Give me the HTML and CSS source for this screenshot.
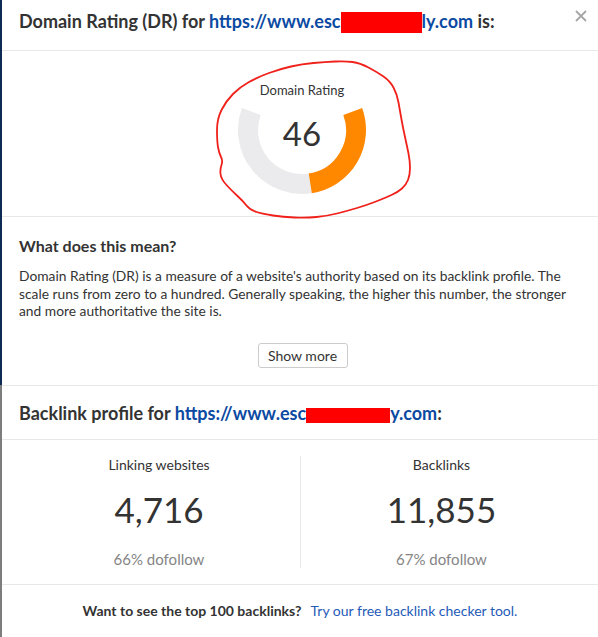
FILE: index.html
```html
<!DOCTYPE html>
<html lang="en">
<head>
    <meta charset="UTF-8">
    <meta name="viewport" content="width=device-width, initial-scale=1.0">
    <title>Domain Rating</title>
    <link rel="stylesheet" href="styles.css">
</head>
<body>
    <div class="modal">
        <div class="modal-header">
            <h2 class="title">Domain Rating (DR) for <a href="#" class="site">https://www.esc<span class="redact redact-lg"></span>ly.com</a> is:</h2>
            <button class="close" aria-label="Close">
                <svg width="12" height="12" viewBox="0 0 12 12"><path d="M1 1L11 11M11 1L1 11" stroke="#a6a6a6" stroke-width="1.8"/></svg>
            </button>
        </div>

        <div class="gauge-section">
            <div class="gauge">
                <svg width="128" height="128" viewBox="0 0 128 128">
                    <path d="M13.26 45.53 A54 54 0 0 0 72.26 117.36" fill="none" stroke="#ebebed" stroke-width="20"/>
                    <path d="M72.26 117.36 A54 54 0 0 0 114.74 45.53" fill="none" stroke="#ff8800" stroke-width="20"/>
                </svg>
                <div class="gauge-label">Domain Rating</div>
                <div class="gauge-value">46</div>
            </div>
            <svg class="scribble" width="596" height="170" viewBox="2 50 596 170">
                <path d="M218,146 Q217,140 217,129 Q217,118 221.5,109 Q226,100 233,93 Q240,86 249,81 Q258,76 269,72 Q280,68 291,65.5 Q302,63 313.5,62 Q325,61 335,60.5 Q345,60 352.5,61 Q360,62 368.5,66.5 Q377,71 383.5,75.5 Q390,80 393.5,86.5 Q397,93 398.5,101.5 Q400,110 401.5,118.5 Q403,127 405,136 Q407,145 408.5,152.5 Q410,160 410,167 Q410,174 408,179 Q406,184 402,187.5 Q398,191 391.5,194 Q385,197 376,200.5 Q367,204 357,207 Q347,210 337,212.5 Q327,215 316.5,216 Q306,217 294.5,216.5 Q283,216 273,214.5 Q263,213 256.5,211 Q250,209 246.5,204.5 Q243,200 237.5,195 Q232,190 226.5,184 Q221,178 220.5,173 Q220,168 221.5,164 Q223,160 221,156 Q219,152 218,146 Z" fill="none" stroke="#f0201a" stroke-width="1.8"/>
            </svg>
        </div>

        <div class="info">
            <h3>What does this mean?</h3>
            <p>Domain Rating (DR) is a measure of a website's authority based on its backlink profile. The scale runs from zero to a hundred. Generally speaking, the higher this number, the stronger and more authoritative the site is.</p>
            <div class="more"><button class="btn">Show more</button></div>
        </div>

        <div class="section-title">
            <h2 class="title">Backlink profile for <a href="#" class="site">https://www.esc<span class="redact redact-sm"></span>y.com</a>:</h2>
        </div>

        <div class="stats">
            <div class="stat">
                <div class="stat-label">Linking websites</div>
                <div class="stat-value">4,716</div>
                <div class="stat-note">66% dofollow</div>
            </div>
            <div class="stat">
                <div class="stat-label">Backlinks</div>
                <div class="stat-value">11,855</div>
                <div class="stat-note">67% dofollow</div>
            </div>
        </div>

        <div class="footer">
            <strong>Want to see the top 100 backlinks?</strong>
            <a href="#">Try our free backlink checker tool.</a>
        </div>
    </div>
</body>
</html>
```

FILE: styles.css
```css
body {
    margin: 0;
    font-family: Lato, "Open Sans", sans-serif;
    color: #333;
    background: linear-gradient(#0f2a52 0, #0f2a52 385px, #7d7d7d 385px);
    min-height: 100vh;
}
.modal {
    margin-left: 2px;
    background: #fff;
    min-height: 100vh;
}
a {
    color: #0b4aa2;
    text-decoration: none;
}
.modal-header {
    display: flex;
    justify-content: space-between;
    align-items: flex-start;
    padding: 10px 11px 17px 17px;
    border-bottom: 1px solid #e8e8e8;
}
.title {
    margin: 0;
    font-size: 18px;
    line-height: 22px;
    font-weight: 700;
    color: #333;
}
.redact {
    display: inline-block;
    background: #ff0000;
    vertical-align: top;
}
.redact-lg {
    width: 81px;
    height: 21px;
    margin-top: 2px;
}
.redact-sm {
    width: 84px;
    height: 15px;
    margin-top: 6px;
}
.close {
    border: none;
    background: none;
    padding: 0;
    width: 12px;
    height: 12px;
    cursor: pointer;
    display: block;
}
.close svg {
    display: block;
}
.gauge-section {
    position: relative;
    padding: 15px 0 22px;
    border-bottom: 1px solid #e8e8e8;
}
.gauge {
    position: relative;
    width: 128px;
    height: 128px;
    margin: 0 auto;
    left: 2px;
}
.gauge svg {
    display: block;
}
.gauge-label {
    position: absolute;
    top: 16px;
    left: -20px;
    right: -20px;
    text-align: center;
    font-size: 13px;
    line-height: 16px;
}
.gauge-value {
    position: absolute;
    top: 45px;
    left: 0;
    right: 0;
    text-align: center;
    font-size: 33px;
    line-height: 44px;
}
.scribble {
    position: absolute;
    left: 0;
    top: 0;
    pointer-events: none;
}
.info {
    padding: 19px 16px 17px 17px;
    border-bottom: 1px solid #e8e8e8;
}
.info h3 {
    margin: 0;
    font-size: 16px;
    line-height: 20px;
    font-weight: 700;
}
.info p {
    margin: 11px 0 0;
    font-size: 13.8px;
    line-height: 17.5px;
}
.more {
    margin-top: 23px;
    text-align: center;
}
.btn {
    font-family: inherit;
    font-size: 14px;
    color: #333;
    background: #fff;
    border: 1px solid #ccc;
    border-radius: 3px;
    height: 25px;
    width: 90px;
    padding: 0;
    margin-left: 4px;
}
.section-title {
    padding: 16px 16px 15px 17px;
    border-bottom: 1px solid #e8e8e8;
}
.stats {
    display: grid;
    grid-template-columns: 1fr 1fr;
    padding: 16px 16px 16px 16px;
    border-bottom: 1px solid #e8e8e8;
    text-align: center;
}
.stat + .stat {
    border-left: 1px solid #e8e8e8;
}
.stat-label {
    font-size: 14px;
    line-height: 18px;
}
.stat-value {
    margin-top: 14px;
    font-size: 35px;
    line-height: 42px;
}
.stat-note {
    margin-top: 20px;
    font-size: 15px;
    line-height: 18px;
    color: #858585;
}
.footer {
    padding: 17px 16px 0;
    text-align: center;
    font-size: 14px;
    line-height: 18px;
}
.footer strong {
    font-weight: 700;
    margin-right: 6px;
}
.footer a {
    color: #1f5bb8;
}
```
